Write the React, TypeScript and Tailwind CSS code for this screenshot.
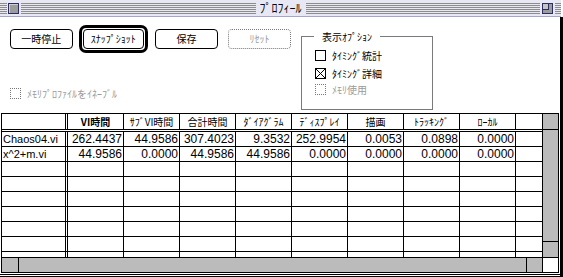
import React from "react";

const jp = "font-['Noto_Sans_CJK_JP',sans-serif]";

const headers = ["VI時間", "ｻﾌﾞVI時間", "合計時間", "ﾀﾞｲｱｸﾞﾗﾑ", "ﾃﾞｨｽﾌﾟﾚｲ", "描画", "ﾄﾗｯｷﾝｸﾞ", "ﾛｰｶﾙ"];

const rows: [string, string[]][] = [
	["Chaos04.vi", ["262.4437", "44.9586", "307.4023", "9.3532", "252.9954", "0.0053", "0.0898", "0.0000"]],
	["x^2+m.vi", ["44.9586", "0.0000", "44.9586", "44.9586", "0.0000", "0.0000", "0.0000", "0.0000"]],
];

const Stripes = ({ className = "" }: { className?: string }) => (
	<div className={`flex flex-col gap-px pt-[3px] ${className}`}>
		{[0, 1, 2, 3, 4, 5].map((i) => (
			<div key={i} className="h-px bg-[#8c8c8c]" />
		))}
	</div>
);

const TitleBar = () => (
	<div className="flex h-[17px] w-[561px] border-b border-[#a4a4d0] bg-[#e8e8f4]">
		<Stripes className="w-[7px]" />
		<div className="ml-px mt-[3px] h-[11px] w-[11px] border border-[#2e2e5e] bg-[#9c9c9c] shadow-[inset_1px_1px_0_#cfcfcf]" />
		<Stripes className="ml-[2px] flex-1" />
		<div className={`${jp} px-[4px] text-[12px] leading-[16px] text-black`}>ﾌﾟﾛﾌｨｰﾙ</div>
		<Stripes className="flex-1" />
		<div className="ml-[2px] mt-[3px] h-[11px] w-[11px] border border-[#2e2e5e] bg-[#9c9c9c]">
			<div className="h-[6px] w-[6px] border-r border-b border-[#2e2e5e] bg-[#c4c4c4]" />
		</div>
		<Stripes className="ml-[2px] w-[6px]" />
	</div>
);

const Button = ({ label, disabled }: { label: string; disabled?: boolean }) => (
	<div
		className={`${jp} flex h-[20px] w-[63px] items-center justify-center rounded-[4px] border text-[10px] leading-none ${
			disabled ? "border-dotted border-[#777] text-[#999]" : "border-black text-black"
		}`}
	>
		{label}
	</div>
);

const CheckBox = ({ checked, disabled }: { checked?: boolean; disabled?: boolean }) => (
	<div
		className={`flex h-[11px] w-[11px] shrink-0 items-center justify-center border ${
			disabled ? "border-dotted border-[#777]" : "border-black"
		}`}
	>
		{checked && (
			<svg width="9" height="9" viewBox="0 0 9 9" shapeRendering="crispEdges">
				<path d="M0 0L9 9M9 0L0 9" stroke="black" strokeWidth="1" />
			</svg>
		)}
	</div>
);

const Option = ({ label, checked, disabled, className = "" }: { label: string; checked?: boolean; disabled?: boolean; className?: string }) => (
	<div className={`flex h-[11px] items-center ${className}`}>
		<CheckBox checked={checked} disabled={disabled} />
		<span className={`${jp} ml-[6px] text-[10px] leading-[11px] ${disabled ? "text-[#9a9a9a]" : "text-black"}`}>{label}</span>
	</div>
);

const Row = ({ name, values, header }: { name?: string; values?: string[]; header?: boolean }) => (
	<div className={`flex ${header ? "h-[18px] border-b-[3px] border-double" : "h-[15px] border-b"} border-black`}>
		<div className="w-[66px] overflow-hidden border-r-[3px] border-double border-black pl-px text-[11px] leading-[14px]">{name}</div>
		{Array.from({ length: 8 }).map((_, i) =>
			header ? (
				<div key={i} className={`${jp} w-[56px] border-r border-black text-center text-[10px] leading-[15px] ${i === 0 ? "font-bold" : ""}`}>
					{headers[i]}
				</div>
			) : (
				<div key={i} className="w-[56px] border-r border-black pr-px text-right text-[12px] leading-[14px]">
					{values ? values[i] : ""}
				</div>
			)
		)}
		<div className="flex-1" />
	</div>
);

export default function App() {
	return (
		<div className="h-[277px] w-[563px] overflow-hidden bg-white font-['Liberation_Sans','Noto_Sans_CJK_JP',sans-serif] text-black">
			<TitleBar />
			<div className="flex h-[260px]">
				<div className="flex w-[560px] flex-col">
					<div className="flex h-[96px]">
						<div className="flex w-[291px] flex-col pl-[10px]">
							<div className="mt-[8px] flex h-[28px] items-center">
								<Button label="一時停止" />
								<div className="ml-[6px] h-[28px] w-[70px] rounded-[7px] border-[3px] border-black p-px">
									<div className={`${jp} flex h-full w-full items-center justify-center rounded-[4px] border border-black text-[10px] leading-none`}>
										ｽﾅｯﾌﾟｼｮｯﾄ
									</div>
								</div>
								<div className="ml-[7px]">
									<Button label="保存" />
								</div>
								<div className="ml-[10px]">
									<Button label="ﾘｾｯﾄ" disabled />
								</div>
							</div>
							<Option className="mt-[35px]" label="ﾒﾓﾘﾌﾟﾛﾌｧｲﾙをｲﾈｰﾌﾞﾙ" disabled />
						</div>
						<div className="ml-[10px] mt-[19px] h-[74px] w-[132px] border border-[#7a7a7a] pl-[13px]">
							<div className={`${jp} -ml-[1px] -mt-[8px] w-fit bg-white px-[8px] text-[10px] leading-[16px]`}>表示ｵﾌﾟｼｮﾝ</div>
							<Option className="mt-[5px]" label="ﾀｲﾐﾝｸﾞ統計" />
							<Option className="mt-[7px]" label="ﾀｲﾐﾝｸﾞ詳細" checked />
							<Option className="mt-[5px]" label="ﾒﾓﾘ使用" disabled />
						</div>
					</div>

					<div className="ml-px flex h-[160px] w-[558px] flex-col border border-black">
						<div className="flex h-[143px]">
							<div className="w-[540px] overflow-hidden">
								<Row header />
								{rows.map(([name, values]) => (
									<Row key={name} name={name} values={values} />
								))}
								{Array.from({ length: 7 }).map((_, i) => (
									<Row key={i} />
								))}
							</div>
							<div className="flex w-[16px] flex-col border-l border-black bg-[#bbbbbb]">
								<div className="h-[16px] border-b border-black" />
								<div className="flex-1" />
								<div className="h-[16px] border-t border-black" />
							</div>
						</div>
						<div className="flex h-[15px] border-t border-black">
							<div className="flex w-[541px] border-r border-black bg-[#bbbbbb]">
								<div className="w-[17px] border-r border-black" />
								<div className="flex-1" />
								<div className="w-[16px] border-l border-black" />
							</div>
							<div className="flex-1 bg-white" />
						</div>
					</div>

					<div className="mt-px h-px bg-black" />
					<div className="mt-px h-px bg-black" />
				</div>
				<div className="w-[3px] bg-black" />
			</div>
		</div>
	);
}
